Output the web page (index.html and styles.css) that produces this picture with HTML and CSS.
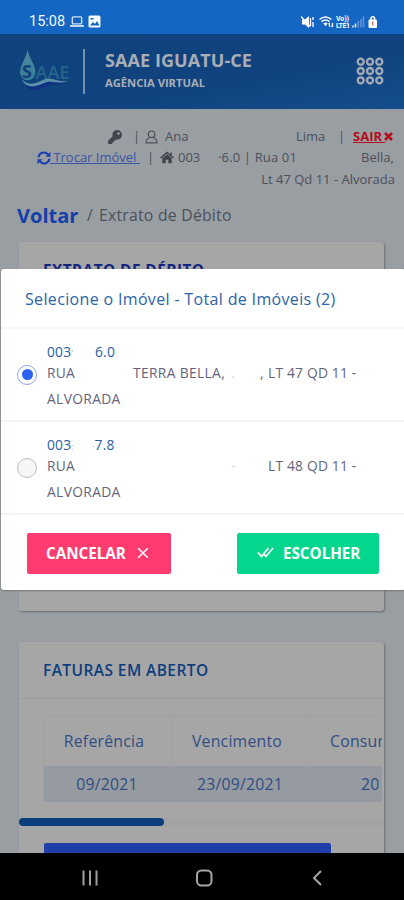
FILE: index.html
```html
<!DOCTYPE html>
<html lang="pt-BR">
<head>
<meta charset="utf-8">
<meta name="viewport" content="width=device-width, initial-scale=1">
<title>SAAE Iguatu-CE - Agência Virtual</title>
<link rel="stylesheet" href="styles.css">
</head>
<body>
<div class="status">
  <span class="clock">15:08</span>
  <svg class="st-laptop" width="14" height="13" viewBox="0 0 15 13" fill="none" stroke="#cfe0f5" stroke-width="1.5"><rect x="2.5" y="1.5" width="10" height="7.5" rx="1"/><path d="M0 11.3h15" stroke-width="2"/></svg>
  <svg class="st-image" width="13" height="13" viewBox="0 0 13 13"><rect x=".5" y=".5" width="12" height="12" rx="1.5" fill="#f4f8ff"/><path d="M2 10.5l3-3.5 2 2 2-3 2.500 4.500z" fill="#1565c0"/><path d="M2.500 3h3v1.500h-3z" fill="#1565c0"/></svg>
  <svg class="st-right" width="78" height="14" viewBox="0 0 78 14">
    <path d="M1 4.500h3l4-3.500v12l-4-3.500H1z" fill="#fff"/><path d="M0 1.500l9 10M9.500 3v8M12 2v3m0 2v5" stroke="#fff" stroke-width="1.300" fill="none"/>
    <path d="M18.500 4.500q6-5 12 0M20.500 6.700q4-3.300 8 0" stroke="#fff" stroke-width="1.500" fill="none"/><path d="M22.300 8.200q2.200-1.500 4.400 0l-2.200 3z" fill="#fff"/><path d="M28.500 12V8m-1 1.500l1-1.500M31.500 8v4m-1-1.500l1 1.500" stroke="#fff" stroke-width="1.200"/>
    <text x="35" y="6.300" class="volte" textLength="13">Vo))</text><text x="35" y="13" class="volte" textLength="14">LTE1</text>
    <path d="M52 12.500v-2M54.500 12.500V8.500" stroke="#dce9fb" stroke-width="1.600"/><path d="M57.300 12.500V6M60 12.500V4M62.500 12.500V1.500" stroke="#5d94d8" stroke-width="1.600"/>
    <path d="M70 5V3.500a1.800 1.800 0 0 1 3.600 0V5" fill="none" stroke="#fff" stroke-width="1.500"/><rect x="67.500" y="4.500" width="8.500" height="8.500" rx="1" fill="#fff"/><path d="M71.800 6.500v4" stroke="#cf7b78" stroke-width="1.500"/>
  </svg>
</div>

<header class="top">
  <svg class="logo" width="56" height="46" viewBox="0 0 56 46">
    <defs><linearGradient id="g" x1="0" y1="0" x2="0" y2="1"><stop offset="0" stop-color="#50889d"/><stop offset="1" stop-color="#357e9d"/></linearGradient></defs>
    <path d="M10.500 2C9 11 3 17 3 24.500a7.700 7.700 0 0 0 15.400 0C18.400 17 12.500 11 10.500 2z" fill="url(#g)"/>
    <text x="5" y="29.500" class="logo-s">S</text><text x="18.500" y="31" class="logo-a" textLength="34">AAE</text>
    <path d="M8 36c11 9 18-4 28-3 6 1 8 2 14 1-12 5-13 0-22 5-9 5-17 3-20-3z" fill="#102f82"/>
    <path d="M4 31c9 8 15 4 22 1 10-4 16 4 26 0-10 6-16-1-25 3-8 4-17 6-23-4z" fill="#5b91a8"/>
  </svg>
  <span class="rule"></span>
  <div class="brand"><div class="name">SAAE IGUATU-CE</div><div class="sub">AGÊNCIA VIRTUAL</div></div>
  <svg class="apps" width="28" height="28" viewBox="0 0 28 28" fill="none" stroke="#a3aab4" stroke-width="2.300"><circle cx="4.700" cy="4.700" r="3"/><circle cx="14" cy="4.700" r="3"/><circle cx="23.300" cy="4.700" r="3"/><circle cx="4.700" cy="14" r="3"/><circle cx="14" cy="14" r="3"/><circle cx="23.300" cy="14" r="3"/><circle cx="4.700" cy="23.300" r="3"/><circle cx="14" cy="23.300" r="3"/><circle cx="23.300" cy="23.300" r="3"/></svg>
</header>

<main class="page">
  <div class="account">
    <div class="line one">
      <svg width="14" height="14" viewBox="0 0 512 512" fill="#42464f"><path d="M512 176c0 97-79 176-176 176-11 0-22-1-33-3l-24 27a24 24 0 0 1-18 8h-37v40a24 24 0 0 1-24 24h-40v40a24 24 0 0 1-24 24H24a24 24 0 0 1-24-24v-78c0-6 3-12 7-17l162-162A176 176 0 1 1 512 176zm-176-48a48 48 0 1 0 96 0 48 48 0 0 0-96 0z"/></svg>
      <span>|</span>
      <svg width="13" height="14" viewBox="0 0 13 14" fill="none" stroke="#4c5059" stroke-width="1.200"><circle cx="6.500" cy="4.300" r="3.300"/><path d="M4.700 7.500C2 8.500 1 10 1 12.800h11C12 10 11 8.500 8.300 7.500"/></svg>
      <span>Ana</span><span>Lima</span><span>|</span>
      <a class="exit">SAIR <svg width="9" height="9" viewBox="0 0 9 9" stroke="#b50d1b" stroke-width="2.500"><path d="M1 1l7 7M8 1L1 8"/></svg></a>
    </div>
    <div class="line two">
      <svg width="14" height="14" viewBox="0 0 14 14" fill="none" stroke="#1a3fae" stroke-width="2"><path d="M1.500 6.300A5.400 5.400 0 0 1 11 3.500M12.500 7.700A5.400 5.400 0 0 1 3 10.500"/><path d="M13.500.8v5H8.500zM.5 13.200v-5h5z" fill="#1a3fae" stroke="none"/></svg>
      <a class="swap">&nbsp;Trocar Imóvel&nbsp;</a><span>|</span>
      <svg width="14" height="13" viewBox="0 0 14 13"><path d="M.5 7L7 1.500 13.500 7M11 1.500V5" fill="none" stroke="#3e424b" stroke-width="1.500"/><path d="M2.300 7.200L7 3.300l4.700 3.900v5H8.400V8.800H5.600v3.400H2.300z" fill="#3e424b"/></svg>
      <span>003</span><span class="street">·6.0 | Rua 01</span><span>Bella,</span>
    </div>
    <div class="line three">Lt 47 Qd 11 - Alvorada</div>
  </div>
  <nav class="crumb"><a>Voltar</a><i>/</i><span>Extrato de Débito</span></nav>
  <section class="card first"><h2>EXTRATO DE DÉBITO</h2></section>
  <section class="card second">
    <h2>FATURAS EM ABERTO</h2>
    <div class="tablewrap">
      <div class="tr th"><span>Referência</span><span>Vencimento</span><span>Consumo</span></div>
      <div class="tr td"><span>09/2021</span><span>23/09/2021</span><span>20</span></div>
    </div>
    <div class="track"><div class="thumb"></div></div>
    <div class="cta"></div>
  </section>
</main>

<div class="modal">
  <h1>Selecione o Imóvel - Total de Imóveis (2)</h1>
  <div class="option">
    <span class="radio on"></span>
    <div class="info">
      <div class="code"><span>003<small>'</small></span><span>6.0</span></div>
      <div class="addr"><span>RUA</span><span class="place">TERRA BELLA,</span><span class="faint">.</span><span>,</span><span>LT 47 QD 11 -</span></div>
      <div class="city">ALVORADA</div>
    </div>
  </div>
  <div class="option">
    <span class="radio"></span>
    <div class="info">
      <div class="code"><span>003<small>:</small></span><span class="seven"><small>·</small>7.8</span></div>
      <div class="addr"><span>RUA</span><span></span><span class="faint">-</span><span></span><span>LT 48 QD 11 -</span></div>
      <div class="city">ALVORADA</div>
    </div>
  </div>
  <div class="actions">
    <button class="cancel"><span>CANCELAR</span><svg width="12" height="12" viewBox="0 0 12 12" stroke="#fff" stroke-width="1.500"><path d="M1.200 1.200l9.600 9.600M10.800 1.200L1.200 10.800"/></svg></button>
    <button class="choose"><svg width="17" height="11" viewBox="0 0 17 11" fill="none" stroke="#fff" stroke-width="1.700"><path d="M1 5.500l3.500 4L11.500 1M7 7l2 2.500L16 1"/></svg><span>ESCOLHER</span></button>
  </div>
</div>

<footer class="keys">
  <svg width="16" height="16" viewBox="0 0 16 16" stroke="#a0a0a0" stroke-width="2"><path d="M1.500 .5v15M8 .5v15M14.500 .5v15"/></svg>
  <svg width="18" height="18" viewBox="0 0 18 18" fill="none" stroke="#a6a6a6" stroke-width="2"><rect x="1" y="1.500" width="14.500" height="15" rx="4.500"/></svg>
  <svg width="10" height="16" viewBox="0 0 10 16" fill="none" stroke="#a6a6a6" stroke-width="2"><path d="M9 1L2 8l7 7"/></svg>
</footer>
</body>
</html>
```
FILE: styles.css
```css
* { box-sizing: border-box; }
body { margin: 0; width: 404px; height: 900px; overflow: hidden; position: relative; display: flex; flex-direction: column; background: #999ea3; font-family: "Open Sans", "Noto Sans", sans-serif; color: #4c5059; }
svg { display: block; flex: none; }
span, a, h1, h2 { white-space: nowrap; }

.status { height: 34px; flex: none; background: #1565c2; display: flex; align-items: center; padding: 9px 25px 0 29px; }
.clock { font: 400 14.5px/16px Roboto, sans-serif; color: #f1f6fd; width: 41px; }
.st-image { margin-left: 4px; }
.st-right { margin-left: auto; }
.volte { font: 700 7px Roboto, sans-serif; fill: #fff; }

.top { height: 75px; flex: none; background: linear-gradient(170deg, #10427c, #10437f 60%, #154d8c); display: flex; align-items: center; padding: 0 20px 1px 17px; }
.logo-s { font: 700 18px "Open Sans", sans-serif; fill: #123f75; }
.logo-a { font: 600 18px "Open Sans", sans-serif; fill: #24658b; }
.rule { width: 2px; height: 45px; background: #7590ad; margin-left: 10px; }
.brand { margin-left: 20px; color: #a9aeb6; font-weight: 700; }
.name { font-size: 18px; line-height: 24px; letter-spacing: .08px; }
.sub { font-size: 11.2px; line-height: 22px; }
.apps { margin-left: auto; }

.page { flex: 1; min-height: 0; overflow: hidden; }
.account { padding-top: 17px; font-size: 13px; }
.line { height: 21px; display: grid; align-items: center; line-height: 21px; }
.one { grid-template-columns: 25px 12px 20px 131px 42px 15px 50px; padding-left: 108px; }
.two { grid-template-columns: 13px 97px 13px 18px 40px 143px 50px; padding-left: 37px; }
.three { text-align: right; padding-right: 9px; display: block; line-height: 22px; }
.exit { color: #b50d1b; font-weight: 700; text-decoration: underline; }
.exit svg { display: inline-block; margin-left: -1px; }
.swap { color: #3a55a3; text-decoration: underline; }
.street { letter-spacing: .15px; }
.crumb { display: flex; align-items: center; height: 30px; margin-top: 11px; padding-left: 17px; font-size: 15.8px; letter-spacing: .22px; }
.crumb a { font-size: 20px; letter-spacing: 0; font-weight: 700; color: #143fa9; width: 70px; }
.crumb i { font-style: normal; width: 12px; }

.card { margin-left: 19px; width: 365px; background: #a6a6a6; border-radius: 3px; box-shadow: 1px 1px 2px #696c70; }
.card h2 { margin: 0; padding-left: 24px; font-size: 15.5px; letter-spacing: .42px; font-weight: 600; color: #0d3d7c; }
.first { height: 369px; margin-top: 12px; padding-top: 18px; }
.card.first h2 { font-weight: 700; font-size: 15.4px; line-height: 22px; color: #13257e; }
.second { height: 230px; margin-top: 31px; display: flex; flex-direction: column; }
.second h2 { height: 57px; flex: none; line-height: 57px; border-bottom: 1px solid #9d9ea0; }
.tablewrap { margin: 16px 2px 0 24px; overflow: hidden; border-left: 1px solid #a0a1a2; border-top: 1px solid #a0a1a2; }
.tr { display: grid; grid-template-columns: 129px 137px 140px; font-size: 15.8px; letter-spacing: .23px; color: #314d84; }
.tr span { text-align: center; }
.tr span:nth-child(3) { text-align: left; }
.th { height: 50px; line-height: 51px; }
.th span { padding-right: 8px; border-right: 1px solid #a0a1a2; }
.th span:nth-child(3) { padding-left: 20px; }
.td { height: 37px; line-height: 36px; background: #969ba1; }
.td span { padding-right: 3px; }
.td span:nth-child(3) { padding-left: 51px; }
.track { margin-top: 16px; height: 8px; background: #a2a3a5; }
.thumb { width: 145px; height: 8px; border-radius: 4px; background: #0b3f7c; }
.cta { margin: 17px 0 0 25px; width: 287px; height: 30px; background: #1f3fa8; border-radius: 2px 2px 0 0; }

.modal { position: absolute; left: 1px; top: 269px; width: 404px; height: 321px; background: #fff; border-radius: 3px; box-shadow: 0 1px 2px #777; }
.modal h1 { margin: 0; height: 60px; padding-left: 24px; line-height: 60px; font-size: 16px; letter-spacing: .34px; font-weight: 500; color: #2c64a8; border-bottom: 2px solid #f4f4f5; }
.option { display: flex; align-items: center; height: 93px; padding-left: 16px; border-bottom: 2px solid #f4f4f5; }
.radio { width: 20px; height: 20px; border: 1px solid #bbbdc0; border-radius: 50%; background: #f5f6f8; display: grid; place-items: center; }
.radio.on { border-color: #92a5ed; background: #fff; }
.radio.on::after { content: ""; width: 11px; height: 11px; border-radius: 50%; background: #2b62f5; }
.info { margin-left: 10px; font-size: 13.8px; letter-spacing: .2px; color: #65647c; height: 76px; padding-top: 5px; }
.info small { font-size: 9px; color: #9db7d5; }
.code { display: grid; grid-template-columns: 48px 40px; height: 20px; line-height: 20px; color: #2861a5; font-weight: 500; }
.seven { margin-left: -3px; }
.addr { display: grid; grid-template-columns: 86px 98px 29px 8px 100px; height: 22px; line-height: 22px; }
.place { letter-spacing: .35px; }
.faint { color: #d8d8df; }
.city { line-height: 29px; letter-spacing: .35px; }
.actions { display: flex; justify-content: space-between; padding: 18px 26px 0; }
.actions button { display: flex; align-items: center; border: 0; border-radius: 2px; height: 41px; color: #fff; font: 700 15.200px "Open Sans", sans-serif; padding: 0 0 2px 19px; }
.cancel { width: 144px; background: #ff3b70; gap: 11px; }
.actions .choose { width: 142px; background: #04d68d; gap: 9px; padding-left: 20px; }

.keys { height: 47px; flex: none; background: #000; display: flex; align-items: center; padding: 2px 82px 0; justify-content: space-between; }
```
